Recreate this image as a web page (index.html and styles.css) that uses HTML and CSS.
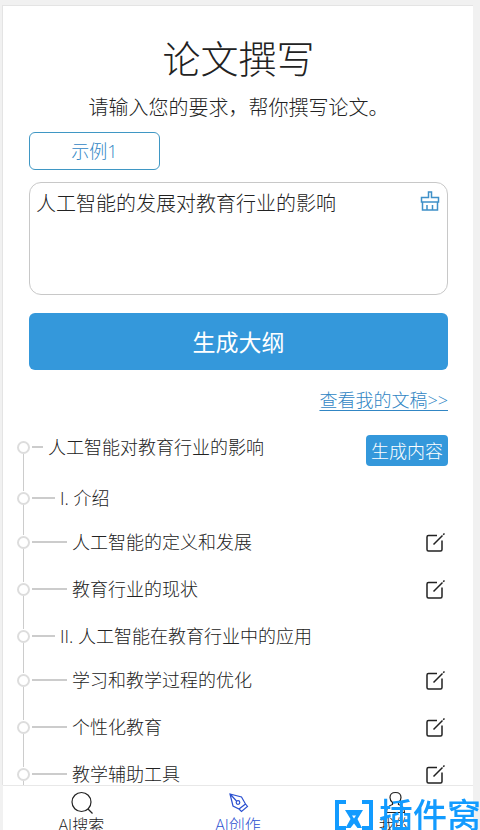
FILE: index.html
```html
<!DOCTYPE html>
<html lang="zh-CN">
<head>
    <meta charset="UTF-8">
    <meta name="viewport" content="width=device-width, initial-scale=1.0">
    <title>论文撰写</title>
    <link rel="stylesheet" href="styles.css">
</head>
<body>
    <!-- shared icons -->
    <svg class="sprite" aria-hidden="true">
        <symbol id="icon-edit" viewBox="0 0 20 20">
            <path d="M12 2.500H3.500Q2 2.500 2 4V16.500Q2 18 3.500 18H15.500Q17 18 17 16.500V7.500M8.500 11.500L17.500 2.500"/>
            <path d="M18.200 1.800L19.500 0.500"/>
        </symbol>
    </svg>

    <div class="page">
        <main class="content">
            <h1>论文撰写</h1>
            <p class="intro">请输入您的要求，帮你撰写论文。</p>
            <button type="button" class="example">示例1</button>
            <form class="topic">
                <div class="topic-box">
                    <textarea class="topic-input" name="topic" aria-label="论文主题">人工智能的发展对教育行业的影响</textarea>
                    <button type="button" class="clear" aria-label="清空">
                        <svg width="20" height="20" viewBox="0 0 20 20">
                            <path d="M8.500 6.500V1H11.500V6.500H18.500V11H1.500V6.500ZM2.500 11V19H17.500V11M7 19V14M12.500 19V14"/>
                        </svg>
                    </button>
                </div>
                <button type="button" class="submit">生成大纲</button>
            </form>
            <a class="drafts" href="#drafts">查看我的文稿&gt;&gt;</a>

            <ul class="outline">
                <li class="row level-1">
                    <span class="node"></span><span class="dash"></span>
                    <span class="text">人工智能对教育行业的影响</span>
                    <button type="button" class="generate">生成内容</button>
                </li>
                <li class="row level-2">
                    <span class="node"></span><span class="dash"></span>
                    <span class="text">I. 介绍</span>
                </li>
                <li class="row level-3">
                    <span class="node"></span><span class="dash"></span>
                    <span class="text">人工智能的定义和发展</span>
                    <button type="button" class="edit" aria-label="编辑"><svg><use href="#icon-edit"/></svg></button>
                </li>
                <li class="row level-3">
                    <span class="node"></span><span class="dash"></span>
                    <span class="text">教育行业的现状</span>
                    <button type="button" class="edit" aria-label="编辑"><svg><use href="#icon-edit"/></svg></button>
                </li>
                <li class="row level-2">
                    <span class="node"></span><span class="dash"></span>
                    <span class="text">II. 人工智能在教育行业中的应用</span>
                </li>
                <li class="row level-3">
                    <span class="node"></span><span class="dash"></span>
                    <span class="text">学习和教学过程的优化</span>
                    <button type="button" class="edit" aria-label="编辑"><svg><use href="#icon-edit"/></svg></button>
                </li>
                <li class="row level-3">
                    <span class="node"></span><span class="dash"></span>
                    <span class="text">个性化教育</span>
                    <button type="button" class="edit" aria-label="编辑"><svg><use href="#icon-edit"/></svg></button>
                </li>
                <li class="row level-3">
                    <span class="node"></span><span class="dash"></span>
                    <span class="text">教学辅助工具</span>
                    <button type="button" class="edit" aria-label="编辑"><svg><use href="#icon-edit"/></svg></button>
                </li>
            </ul>
        </main>

        <nav class="tabs">
            <a class="tab" href="#search">
                <svg width="24" height="24" viewBox="0 0 24 24">
                    <circle cx="12.500" cy="11" r="9.500"/>
                    <path d="M19 18L23.500 22.500"/>
                </svg>
                <span>AI搜索</span>
            </a>
            <a class="tab active" href="#create">
                <svg width="24" height="24" viewBox="0 0 24 24">
                    <path d="M4 3L15.500 6L19.500 13L13 18L7 15ZM4 3L10.500 10M19.500 13L21.500 15.500L15.500 20.500L13 18"/>
                    <circle cx="12" cy="11.500" r="1.800"/>
                </svg>
                <span>AI创作</span>
            </a>
            <a class="tab" href="#mine">
                <svg width="24" height="24" viewBox="0 0 24 24">
                    <path d="M9.500 11.500Q7 9.500 7 6.500Q7 1.500 12.500 1.500Q18 1.500 18 6.500Q18 9.500 15.500 11.500V13.500Q21.500 15 21.500 21.500H3.500Q3.500 15 9.500 13.500Z"/>
                </svg>
                <span>我的</span>
            </a>
        </nav>
    </div>

    <div class="watermark">
        <svg width="40" height="30" viewBox="0 0 40 30">
            <path class="frame" d="M12 2H3V28H12M28 2H37V28H28"/>
            <path class="mark" fill-rule="evenodd" d="M11 10H29L23.500 19L28 28H23.500L20 23.500L16.500 28H11.500L16.500 19ZM18 15.500L20 18.500L22 15.500Z"/>
        </svg>
        <span>插件窝</span>
    </div>
</body>
</html>
```
FILE: styles.css
```css
* {
    box-sizing: border-box;
}

body {
    margin: 0;
    background-color: #f1f1f1;
    color: #222;
    font-family: "Open Sans", "Noto Sans CJK SC", sans-serif;
    font-size: 18px;
    font-weight: 300;
    line-height: 24px;
    overflow: hidden;
}

button,
textarea {
    font: inherit;
    color: inherit;
}

button {
    padding: 0;
    border: none;
    background: none;
    cursor: pointer;
}

svg {
    display: block;
    fill: none;
    stroke: currentColor;
    stroke-width: 1.5;
}

.sprite {
    display: none;
}

.page {
    display: flex;
    flex-direction: column;
    height: 100vh;
    padding: 5px 7px 0 2px;
}

.content {
    display: flex;
    flex-direction: column;
    flex: 1;
    min-height: 0;
    overflow: hidden;
    padding: 29px 25px 0 26px;
    background-color: #fff;
    border: 1px solid #e4e4e4;
    border-width: 1px 0 0 1px;
}

h1 {
    margin: 0;
    font-size: 38px;
    font-weight: 300;
    line-height: 46px;
    text-align: center;
}

.intro {
    margin: 12px 0 9px;
    font-size: 20px;
    line-height: 30px;
    text-align: center;
}

.example {
    flex: none;
    width: 131px;
    height: 38px;
    border: 1px solid #3f97c4;
    border-radius: 6px;
    color: #3186c4;
}

.topic {
    margin-top: 12px;
}

.topic-box {
    position: relative;
}

.topic-input {
    display: block;
    width: 100%;
    height: 113px;
    padding: 6px 36px 5px 6px;
    border: 1px solid #c8c8c8;
    border-radius: 12px;
    font-size: 20px;
    line-height: 30px;
    background: #fff;
    resize: none;
    outline: none;
}

.clear {
    position: absolute;
    top: 9px;
    right: 8px;
    color: #3f90c8;
}

.submit {
    width: 100%;
    height: 57px;
    margin-top: 18px;
    border-radius: 6px;
    background-color: #3498db;
    color: #fff;
    font-size: 23px;
    font-weight: 400;
}

.drafts {
    align-self: flex-end;
    margin-top: 18px;
    color: #3186c4;
    text-underline-offset: 3px;
}

.outline {
    flex: none;
    margin: 23px 0 0 -12px;
    padding: 0;
    list-style: none;
}

.row {
    display: flex;
    position: relative;
    align-items: center;
    height: 24px;
    margin-bottom: 23px;
}

/* vertical line down to the next node */
.row::after {
    content: "";
    position: absolute;
    top: 19px;
    bottom: -28px;
    left: 6px;
    width: 1px;
    background-color: #ccc;
}

.node {
    width: 13px;
    height: 13px;
    border: 2px solid #ddd;
    border-radius: 50%;
}

.dash {
    width: 35px;
    height: 2px;
    margin: 0 5px 0 2px;
    background-color: #ccc;
}

.text {
    flex: 1;
    white-space: nowrap;
}

.level-1 {
    margin-bottom: 27px;
}

.level-1::after {
    bottom: -32px;
}

.level-1 .dash {
    width: 11px;
}

.level-2 {
    margin-bottom: 20px;
}

.level-2::after {
    bottom: -25px;
}

.level-2 .dash {
    width: 23px;
}

.generate {
    width: 82px;
    height: 31px;
    margin-top: 7px;
    border-radius: 4px;
    background-color: #3498db;
    color: #fff;
}

.edit {
    margin: 2px 3px 0 0;
}

.edit svg {
    width: 20px;
    height: 20px;
}

.tabs {
    display: flex;
    flex: none;
    height: 45px;
    overflow: hidden;
    margin-left: 1px;
    border-top: 1px solid #e8e8e8;
    background-color: #fff;
}

.tab {
    display: flex;
    flex: 1;
    flex-direction: column;
    align-items: center;
    padding-top: 5px;
    color: #222;
    font-size: 16px;
    line-height: 20px;
    text-decoration: none;
}

.tab svg {
    flex: none;
    stroke-width: 1.2;
}

.tab.active {
    color: #2b50d0;
}

.watermark {
    display: flex;
    position: fixed;
    left: calc(100% - 146px);
    bottom: 0;
    align-items: center;
    gap: 5px;
    height: 30px;
    color: #129bff;
    font-size: 34px;
    font-weight: 500;
    line-height: 30px;
    white-space: nowrap;
}

.watermark .frame {
    stroke-width: 4;
}

.watermark .mark {
    fill: currentColor;
    stroke: none;
}
```
